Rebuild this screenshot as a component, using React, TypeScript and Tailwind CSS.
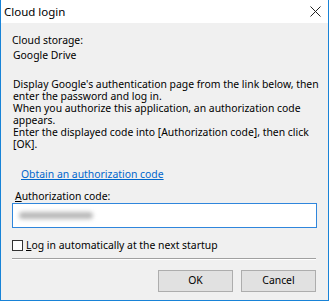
import React from 'react';

const lines = [
  "Display Google's authentication page from the link below, then",
  'enter the password and log in.',
  'When you authorize this application, an authorization code',
  'appears.',
  'Enter the displayed code into [Authorization code], then click',
  '[OK].',
];

export default function App() {
  return (
    <div
      className="w-[329px] h-[301px] flex flex-col bg-[#f0f0f0] border-x border-b border-[#1883d7] text-[10.4px] text-black overflow-hidden"
      style={{ fontFamily: '"Noto Sans", "Open Sans", sans-serif' }}
    >
      {/* title bar */}
      <div className="h-[23px] shrink-0 bg-white flex items-center justify-between pl-[3px] pr-[7px]">
        <span className="text-[11.5px] leading-[15px]">Cloud login</span>
        <svg width="11" height="11" viewBox="0 0 11 11" className="text-[#222]">
          <path d="M0.5 0.5 L10.5 10.5 M10.5 0.5 L0.5 10.5" stroke="currentColor" strokeWidth="1" />
        </svg>
      </div>

      <div className="flex flex-col px-[11px]">
        <div className="mt-[10px] leading-[15px]">Cloud storage:</div>
        <div className="leading-[15px] pl-[1px]">Google Drive</div>

        <div className="mt-[15px] pl-[1px] leading-[12px] whitespace-nowrap">
          {lines.map((l) => (
            <div key={l}>{l}</div>
          ))}
        </div>

        <a href="#" className="mt-[17px] ml-[9px] leading-[15px] text-[#0066cc] underline self-start">
          Obtain an authorization code
        </a>

        <div className="mt-[8px] ml-[3px] leading-[13px]">
          <span className="underline">A</span>uthorization code:
        </div>

        <div className="h-[25px] bg-white border border-[#2f86dc] flex items-center px-[6px]">
          <div className="w-[74px] h-[7px] rounded-full bg-[#b9b9b9] blur-[2px]" />
        </div>

        <label className="mt-[11px] flex items-center gap-[3px] leading-[13px]">
          <span className="w-[11px] h-[11px] bg-white border border-[#333]" />
          <span>
            <span className="underline">L</span>og in automatically at the next startup
          </span>
        </label>

        <div className="mt-[6px] border-t border-[#a0a0a0] border-b border-b-white mr-[1px]" />

        <div className="mt-[10px] flex justify-end gap-[8px] mr-[1px]">
          <button className="w-[75px] h-[22px] bg-[#e1e1e1] border border-[#adadad] text-[10.4px]">OK</button>
          <button className="w-[75px] h-[22px] bg-[#e1e1e1] border border-[#adadad] text-[10.4px]">Cancel</button>
        </div>
      </div>
    </div>
  );
}
